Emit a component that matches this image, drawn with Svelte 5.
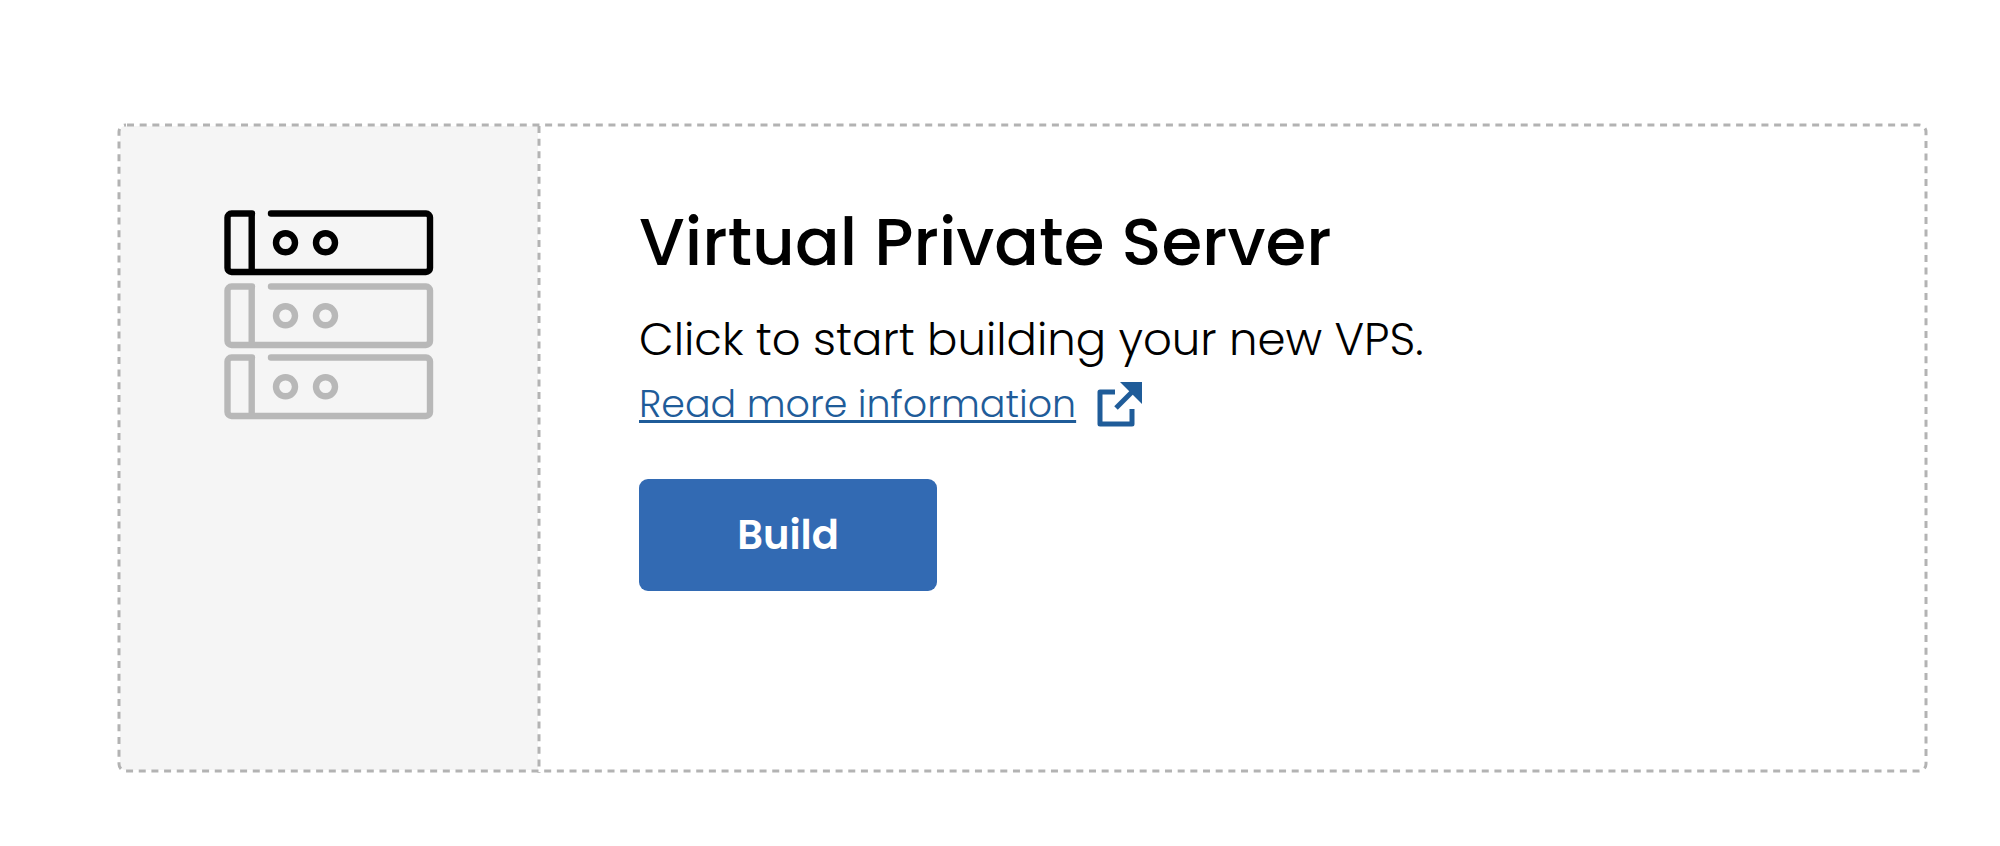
<script lang="ts">
  interface Props {
    title?: string;
    description?: string;
    infoUrl?: string;
    onBuild?: () => void;
  }
  let {
    title = "Virtual Private Server",
    description = "Click to start building your new VPS.",
    infoUrl = "#vps",
    onBuild,
  }: Props = $props();

  // top edge of each unit in the rack, first one is the active one
  const UNITS = [
    { y: 0, active: true },
    { y: 73, active: false },
    { y: 144, active: false },
  ];
</script>

<main class="page">
  <section class="card">
    <div class="side">
      <svg class="rack" viewBox="0 0 210 210" aria-hidden="true">
        {#each UNITS as unit}
          <g class="unit" class:active={unit.active} transform="translate(0 {unit.y})">
            <path d="M28 3.5H7.5a4 4 0 0 0-4 4V58a4 4 0 0 0 4 4h194.500a4 4 0 0 0 4-4V7.500a4 4 0 0 0-4-4H47" />
            <path class="post" d="M27.700 3.500V62" />
            <circle cx="61.500" cy="32.700" r="9.500" />
            <circle cx="101.500" cy="32.700" r="9.500" />
          </g>
        {/each}
      </svg>
    </div>

    <div class="content">
      <h2>{title}</h2>
      <p>{description}</p>
      <a class="more" href={infoUrl}>
        <span>Read more information</span>
        <svg class="external" viewBox="0 0 45 45" aria-hidden="true">
          <path class="frame" d="M18 10H3v32h32V27" />
          <path class="shaft" d="M19 26 36 9" />
          <path class="head" d="M23 0h22v22z" />
        </svg>
      </a>
      <button type="button" onclick={() => onBuild?.()}>Build</button>
    </div>

    <svg class="outline" aria-hidden="true">
      <rect class="edge" x="2" y="2" rx="7" />
      <line class="divider" x1="422" y1="3" x2="422" y2="100%" />
    </svg>
  </section>
</main>

<style>
  :global(body) {
    background: #fff;
  }
  .page {
    padding: 123px 72px 72px 117px;
    font-family: Poppins, Inter, sans-serif;
    color: #000;
  }
  .card {
    position: relative;
    display: flex;
    box-sizing: border-box;
    min-height: 650px;
    padding: 3px;
  }
  /* the dashes are longer than what a dashed border gives */
  .outline {
    position: absolute;
    inset: 0;
    width: 100%;
    height: 100%;
    pointer-events: none;
  }
  .edge,
  .divider {
    fill: none;
    stroke: #b3b3b3;
    stroke-width: 3;
    stroke-dasharray: 7 5.67;
  }
  .edge {
    width: calc(100% - 4px);
    height: calc(100% - 4px);
    stroke-dashoffset: -1;
  }
  .side {
    flex: none;
    padding: 84px 104px;
    border-radius: 5px 0 0 5px;
    background: #f5f5f5;
  }
  .rack {
    display: block;
    width: 210px;
    height: 210px;
  }
  .unit {
    fill: none;
    stroke: #b8b8b8;
    stroke-width: 6.4;
    stroke-linecap: round;
    stroke-linejoin: round;
  }
  .unit.active {
    stroke: #000;
  }
  .unit .post {
    stroke-linecap: butt;
  }
  .content {
    flex: 1;
    display: flex;
    flex-direction: column;
    align-items: flex-start;
    padding: 68px 101px;
  }
  h2 {
    margin: 0;
    font-size: 66px;
    line-height: 96px;
    font-weight: 500;
  }
  p {
    margin: 18px 0 0;
    font-size: 45px;
    line-height: 64px;
    font-weight: 300;
  }
  .more {
    display: flex;
    align-items: center;
    gap: 21px;
    color: #1f5c99;
    font-size: 38px;
    line-height: 64px;
    font-weight: 300;
    text-decoration: none;
  }
  .more span {
    text-decoration: underline;
    text-decoration-thickness: 3px;
    text-underline-offset: 3px;
    text-decoration-skip-ink: none;
  }
  .external {
    width: 45px;
    height: 45px;
  }
  .frame,
  .shaft {
    fill: none;
    stroke: #1f5c99;
    stroke-width: 5;
    stroke-linejoin: round;
  }
  .head {
    fill: #1f5c99;
  }
  button {
    min-width: 298px;
    margin-top: 43px;
    padding: 24px 48px;
    border: none;
    border-radius: 9px;
    background: #326ab3;
    color: #fff;
    font-family: inherit;
    font-size: 40px;
    line-height: 64px;
    font-weight: 600;
    cursor: pointer;
  }
</style>
